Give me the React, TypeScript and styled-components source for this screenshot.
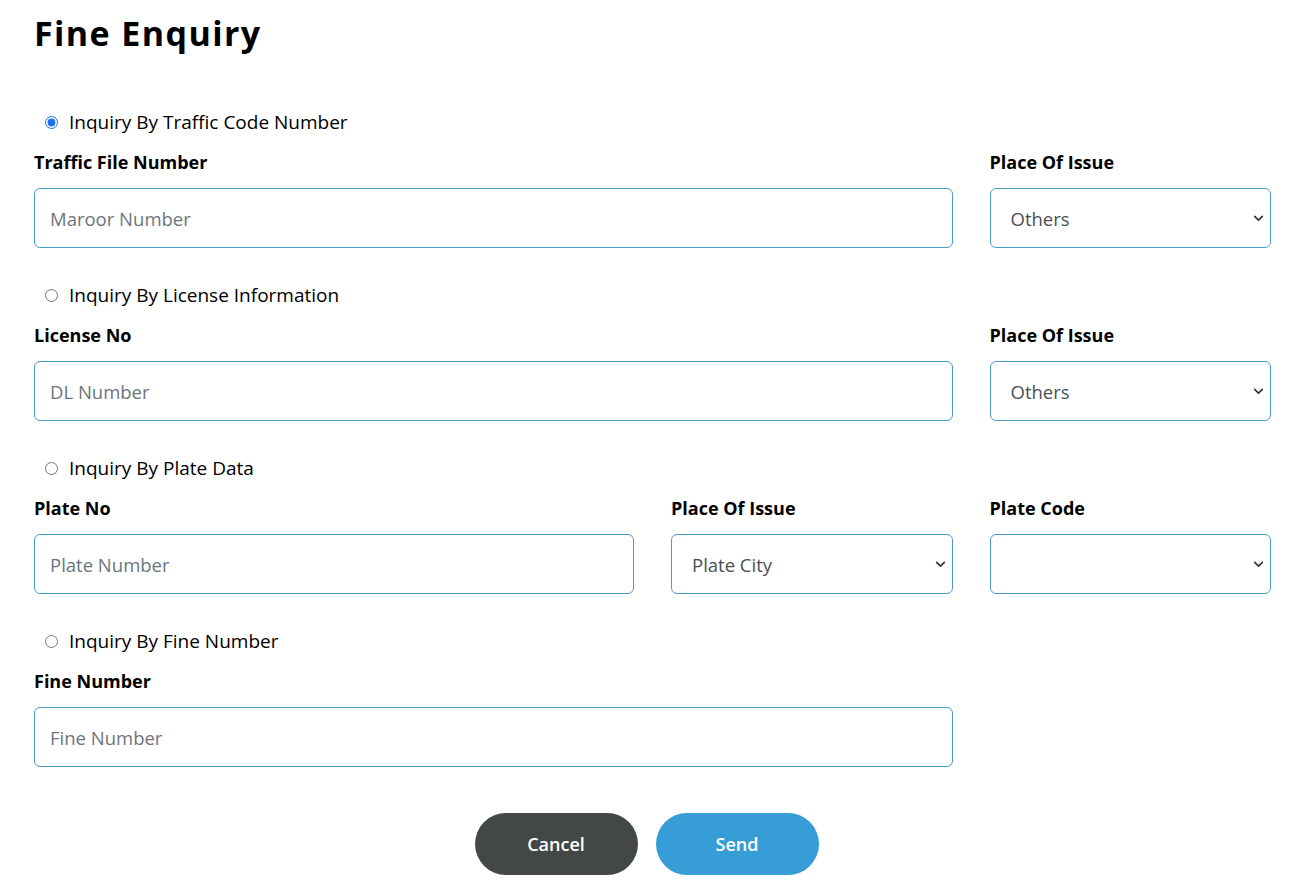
import React, { useState } from "react";
import styled, { createGlobalStyle } from "styled-components";

const Global = createGlobalStyle`
  html, body { margin: 0; padding: 0; background: #fff; }
  body { font-family: "Open Sans", "Noto Sans", sans-serif; color: #000; }
  * { box-sizing: border-box; }
`;

const Page = styled.div`
  padding: 8px 31px 16px 34px;
`;

const Title = styled.h1`
  margin: 0;
  font-size: 34px;
  font-weight: 700;
  line-height: 50px;
  letter-spacing: 1.4px;
  color: #000;
`;

const Form = styled.form`
  margin-top: 51px;
  display: flex;
  flex-direction: column;
`;

const Section = styled.div`
  display: flex;
  flex-direction: column;
  margin-bottom: 34px;
`;

const RadioRow = styled.label`
  display: flex;
  align-items: center;
  gap: 11px;
  padding-left: 11px;
  height: 26px;
  font-size: 19px;
  color: #000;
  cursor: pointer;
`;

const Radio = styled.input`
  margin: 0;
  width: 13px;
  height: 13px;
  accent-color: #1a73e8;
`;

const Grid = styled.div`
  display: grid;
  grid-template-columns: repeat(4, 1fr);
  column-gap: 37px;
  margin-top: 15px;
`;

const Field = styled.div<{ $span: number }>`
  grid-column: span ${(p) => p.$span};
  display: flex;
  flex-direction: column;
`;

const Label = styled.div`
  font-size: 18px;
  font-weight: 700;
  line-height: 24px;
  height: 24px;
  margin-bottom: 14px;
`;

const TextInput = styled.input`
  height: 60px;
  width: 100%;
  border: 1px solid #4b9dc9;
  border-radius: 6px;
  padding: 0 15px;
  font-family: inherit;
  font-size: 18.5px;
  color: #495057;
  outline: none;
  &::placeholder { color: #6c757d; }
`;

const SelectWrap = styled.div`
  position: relative;
  height: 60px;
`;

const Select = styled.select`
  appearance: none;
  height: 60px;
  width: 100%;
  border: 1px solid #4b9dc9;
  border-radius: 6px;
  padding: 0 20px;
  font-family: inherit;
  font-size: 18.5px;
  color: #495057;
  background: #fff;
  outline: none;
`;

const Chevron = styled.svg`
  position: absolute;
  right: 7px;
  top: 50%;
  width: 11px;
  height: 11px;
  margin-top: -5px;
  pointer-events: none;
`;

const Actions = styled.div`
  display: flex;
  justify-content: center;
  gap: 18px;
  margin-top: 12px;
  padding-right: 12px;
`;

const Button = styled.button<{ $variant: "cancel" | "send" }>`
  width: 163px;
  height: 62px;
  border: none;
  border-radius: 31px;
  font-family: inherit;
  font-size: 18px;
  font-weight: 600;
  color: #fff;
  background: ${(p) => (p.$variant === "cancel" ? "#434847" : "#379dd6")};
  cursor: pointer;
`;

const SelectBox: React.FC<{ value: string; options: string[] }> = ({ value, options }) => (
  <SelectWrap>
    <Select defaultValue={value}>
      {options.map((o) => (
        <option key={o} value={o}>
          {o}
        </option>
      ))}
    </Select>
    <Chevron viewBox="0 0 10 10">
      <path d="M1.5 3 L5 6.5 L8.5 3" fill="none" stroke="#333" strokeWidth="1.5" strokeLinecap="round" strokeLinejoin="round" />
    </Chevron>
  </SelectWrap>
);

export default function App() {
  const [mode, setMode] = useState("traffic");
  return (
    <Page>
      <Global />
      <Title>Fine Enquiry</Title>
      <Form onSubmit={(e) => e.preventDefault()}>
        <Section>
          <RadioRow>
            <Radio type="radio" name="mode" checked={mode === "traffic"} onChange={() => setMode("traffic")} />
            Inquiry By Traffic Code Number
          </RadioRow>
          <Grid>
            <Field $span={3}>
              <Label>Traffic File Number</Label>
              <TextInput placeholder="Maroor Number" />
            </Field>
            <Field $span={1}>
              <Label>Place Of Issue</Label>
              <SelectBox value="Others" options={["Others", "Dubai", "Abu Dhabi", "Sharjah"]} />
            </Field>
          </Grid>
        </Section>
        <Section>
          <RadioRow>
            <Radio type="radio" name="mode" checked={mode === "license"} onChange={() => setMode("license")} />
            Inquiry By License Information
          </RadioRow>
          <Grid>
            <Field $span={3}>
              <Label>License No</Label>
              <TextInput placeholder="DL Number" />
            </Field>
            <Field $span={1}>
              <Label>Place Of Issue</Label>
              <SelectBox value="Others" options={["Others", "Dubai", "Abu Dhabi", "Sharjah"]} />
            </Field>
          </Grid>
        </Section>
        <Section>
          <RadioRow>
            <Radio type="radio" name="mode" checked={mode === "plate"} onChange={() => setMode("plate")} />
            Inquiry By Plate Data
          </RadioRow>
          <Grid>
            <Field $span={2}>
              <Label>Plate No</Label>
              <TextInput placeholder="Plate Number" />
            </Field>
            <Field $span={1}>
              <Label>Place Of Issue</Label>
              <SelectBox value="Plate City" options={["Plate City", "Dubai", "Abu Dhabi", "Sharjah"]} />
            </Field>
            <Field $span={1}>
              <Label>Plate Code</Label>
              <SelectBox value="" options={[""]} />
            </Field>
          </Grid>
        </Section>
        <Section>
          <RadioRow>
            <Radio type="radio" name="mode" checked={mode === "fine"} onChange={() => setMode("fine")} />
            Inquiry By Fine Number
          </RadioRow>
          <Grid>
            <Field $span={3}>
              <Label>Fine Number</Label>
              <TextInput placeholder="Fine Number" />
            </Field>
          </Grid>
        </Section>
        <Actions>
          <Button type="button" $variant="cancel">Cancel</Button>
          <Button type="submit" $variant="send">Send</Button>
        </Actions>
      </Form>
    </Page>
  );
}
